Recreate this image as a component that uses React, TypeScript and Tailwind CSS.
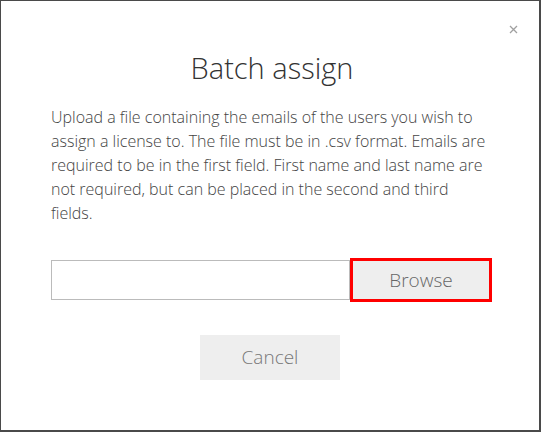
const BatchAssignDialog = () => {
  return (
    <div
      className="relative w-[541px] h-[432px] bg-white border-l border-t border-r-2 border-b-2 border-[#4a4a4a]"
      style={{ fontFamily: '"Open Sans", sans-serif' }}
    >
      {/* close */}
      <button className="absolute top-[22px] right-[20px] w-[12px] h-[12px] flex items-center justify-center">
        <svg width="9" height="9" viewBox="0 0 9 9">
          <path d="M1 1 L8 8 M8 1 L1 8" stroke="#a0a0a0" strokeWidth="1.3" />
        </svg>
      </button>

      <div className="pt-[48px] pl-[50px] pr-[46px]">
        <h1 className="text-center text-[29px] leading-[38px] font-light text-[#333]">
          Batch assign
        </h1>

        <p className="mt-[18px] text-[16px] leading-[24px] font-light text-[#444]">
          Upload a file containing the emails of the users you wish to assign a
          license to. The file must be in .csv format. Emails are required to be
          in the first field. First name and last name are not required, but can
          be placed in the second and third fields.
        </p>

        <div className="mt-[33px] mr-[1px] flex items-center">
          <input
            type="text"
            className="h-[40px] flex-1 border border-[#bbb] outline-none"
          />
          <button className="w-[142px] h-[44px] border-[3px] border-[#f00] bg-[#eee] text-[19px] font-light text-[#666]">
            Browse
          </button>
        </div>

        <div className="mt-[33px] mr-[4px] flex justify-center">
          <button className="w-[140px] h-[45px] bg-[#eee] text-[19px] font-light text-[#777]">
            Cancel
          </button>
        </div>
      </div>
    </div>
  );
};

export default function App() {
  return <BatchAssignDialog />;
}
